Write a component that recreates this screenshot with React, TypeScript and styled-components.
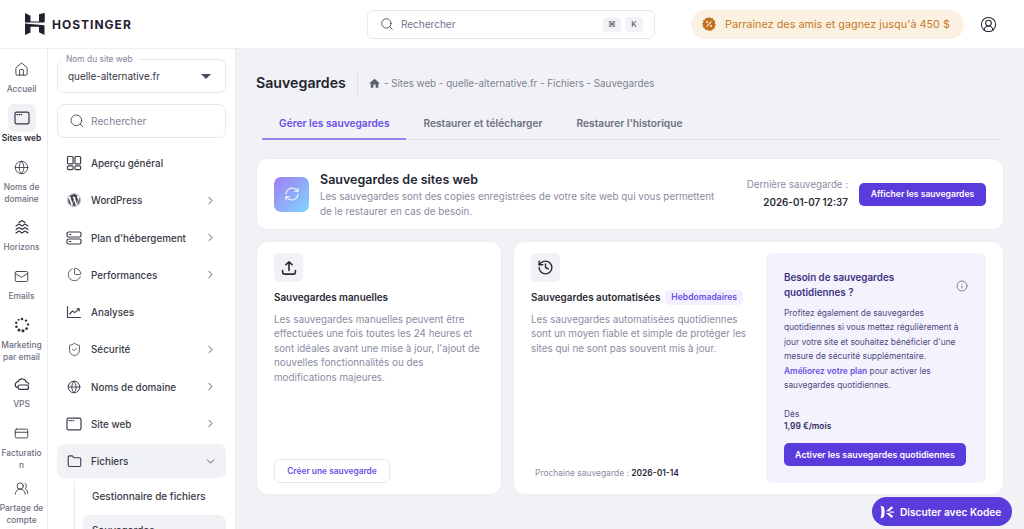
import React from "react";
import styled, { createGlobalStyle } from "styled-components";
import {
  ChartPie,
  ChevronDown,
  ChevronRight,
  CircleUserRound,
  CreditCard,
  Folder,
  Globe,
  History,
  House,
  Info,
  Mail,
  RefreshCw,
  Search,
  ShieldCheck,
  UsersRound,
} from "lucide-react";
import { FaWordpress } from "react-icons/fa";
import { MdHome } from "react-icons/md";

const GlobalStyle = createGlobalStyle`
  html, body {
    margin: 0;
    height: 100%;
    overflow: hidden;
    background: #fff;
    font-family: Inter, "Liberation Sans", sans-serif;
    color: #2a2b36;
  }
  * { box-sizing: border-box; }
`;

const Page = styled.div`
  display: flex;
  flex-direction: column;
  height: 529px;
  overflow: hidden;
  position: relative;
`;

const TopBar = styled.header`
  display: flex;
  align-items: center;
  height: 49px;
  flex-shrink: 0;
  border-bottom: 1px solid #eceef3;
  background: #fff;
  padding: 0 25px;
`;

const Logo = styled.div`
  display: flex;
  align-items: center;
  gap: 7px;
  width: 342px;
  font-size: 12px;
  font-weight: 700;
  letter-spacing: 1px;
  color: #1f2030;
`;

const TopSearch = styled.div`
  display: flex;
  align-items: center;
  width: 288px;
  height: 29px;
  border: 1px solid #e8e9ef;
  border-radius: 6px;
  padding: 0 11px 0 12px;
  gap: 7px;
  font-size: 10px;
  color: #73748a;
  svg { color: #45465a; }
`;

const Spacer = styled.span`
  flex: 1;
`;

const Key = styled.span`
  display: flex;
  align-items: center;
  justify-content: center;
  width: 18px;
  height: 15px;
  border-radius: 4px;
  background: #f1f2f6;
  font-size: 8px;
  color: #45465a;
  margin-left: -3px;
`;

const Promo = styled.div`
  display: flex;
  align-items: center;
  gap: 9px;
  height: 29px;
  width: 273px;
  margin-left: 36px;
  border-radius: 15px;
  background: #fbf1e2;
  padding: 0 11px;
  font-size: 10.85px;
  color: #c77a26;
  white-space: nowrap;
`;

const UserIcon = styled.div`
  display: flex;
  margin-left: 16px;
  color: #24252f;
`;

const Body = styled.div`
  display: flex;
  flex: 1;
  min-height: 0;
`;

const Rail = styled.nav`
  width: 48px;
  flex-shrink: 0;
  border-right: 1px solid #eceef3;
  padding-top: 6px;
  display: flex;
  flex-direction: column;
  align-items: flex-start;
  overflow: hidden;
`;

const RailItem = styled.div<{ $after: number }>`
  display: flex;
  flex-direction: column;
  align-items: center;
  width: 43px;
  flex-shrink: 0;
  margin-bottom: ${(p) => p.$after}px;
`;

const RailIcon = styled.div<{ $active?: boolean }>`
  width: 28px;
  height: 28px;
  border-radius: 6px;
  display: flex;
  align-items: center;
  justify-content: center;
  color: #32333f;
  background: ${(p) => (p.$active ? "#f0f1f4" : "transparent")};
`;

const RailLabel = styled.div<{ $active?: boolean }>`
  font-size: 8.4px;
  line-height: 12px;
  text-align: center;
  white-space: pre;
  font-weight: ${(p) => (p.$active ? 600 : 500)};
  color: ${(p) => (p.$active ? "#2a2b36" : "#6d6e80")};
`;

const Side = styled.aside`
  width: 187px;
  flex-shrink: 0;
  background: #fff;
  padding: 10px 9px 0 9px;
  overflow: hidden;
`;

const SiteSelect = styled.div`
  position: relative;
  display: flex;
  align-items: center;
  justify-content: space-between;
  height: 34px;
  border: 1px solid #e8e9ef;
  border-radius: 7px;
  padding: 0 14px 0 10px;
  font-size: 9.9px;
  color: #35363f;
`;

const Legend = styled.span`
  position: absolute;
  left: 3px;
  top: -7px;
  padding: 0 5px;
  background: #fff;
  font-size: 8.4px;
  line-height: 12px;
  color: #83849a;
`;

const Caret = styled.span`
  width: 0;
  height: 0;
  border-left: 5px solid transparent;
  border-right: 5px solid transparent;
  border-top: 5px solid #4a4b5c;
`;

const SideSearch = styled.div`
  display: flex;
  align-items: center;
  gap: 6px;
  height: 34px;
  margin: 11px 0 8px;
  border: 1px solid #e8e9ef;
  border-radius: 7px;
  padding: 0 11px;
  font-size: 10.2px;
  color: #83849a;
  svg { color: #4a4b5c; }
`;

const MenuRow = styled.div<{ $open?: boolean }>`
  display: flex;
  align-items: center;
  height: 34px;
  margin-bottom: 3.25px;
  border-radius: 7px;
  padding: 0 9px 0 9px;
  gap: 9px;
  font-size: 9.85px;
  font-weight: 500;
  color: #3a3b48;
  background: ${(p) => (p.$open ? "#f1f2f5" : "transparent")};
  svg { flex-shrink: 0; }
`;

const MenuIcon = styled.span`
  display: flex;
  width: 16px;
  justify-content: center;
  color: #3d3e4c;
`;

const MenuText = styled.span`
  flex: 1;
`;

const SubMenu = styled.div`
  margin-left: 17px;
  border-left: 1px solid #e8e9ef;
  padding-left: 8px;
`;

const SubRow = styled.div<{ $active?: boolean }>`
  display: flex;
  align-items: center;
  height: 30px;
  padding-left: 9px;
  margin-bottom: 4px;
  border-radius: 7px;
  font-size: 10px;
  font-weight: 500;
  color: #3a3b48;
  background: ${(p) => (p.$active ? "#f1f2f5" : "transparent")};
`;

const Main = styled.main`
  flex: 1;
  min-width: 0;
  background: #f1f2f6;
  border-left: 1px solid #e9eaef;
  padding: 22px 21px 0 21px;
  overflow: hidden;
`;

const TitleRow = styled.div`
  display: flex;
  align-items: center;
  height: 24px;
`;

const PageTitle = styled.h1`
  margin: 0 0 0 -1px;
  padding-right: 11px;
  height: 24px;
  line-height: 24px;
  border-right: 1px solid #dfe0e7;
  font-size: 14.2px;
  font-weight: 600;
  color: #23242e;
`;

const Crumbs = styled.div`
  display: flex;
  align-items: center;
  gap: 3px;
  margin-left: 10px;
  font-size: 9.8px;
  color: #80818f;
  svg { color: #5d5e6e; }
`;

const Tabs = styled.div`
  display: flex;
  margin: 11px 0 19px 5px;
  height: 34px;
  border-bottom: 1px solid #e4e5ec;
`;

const Tab = styled.div<{ $active?: boolean }>`
  display: flex;
  align-items: center;
  justify-content: center;
  height: 34px;
  padding: 1px 17px 0;
  font-size: 10.2px;
  font-weight: 600;
  white-space: nowrap;
  color: ${(p) => (p.$active ? "#6c4fe6" : "#6f7082")};
  border-bottom: 2px solid ${(p) => (p.$active ? "#9c84ec" : "transparent")};
`;

const Card = styled.section`
  background: #fff;
  border-radius: 10px;
  box-shadow: 0 0 2px rgba(40, 40, 80, 0.08);
`;

const HeroCard = styled(Card)`
  display: flex;
  align-items: center;
  height: 70px;
  padding: 0 17px;
  margin-bottom: 13px;
`;

const HeroIcon = styled.div`
  width: 35px;
  height: 35px;
  flex-shrink: 0;
  border-radius: 7px;
  margin-right: 11px;
  display: flex;
  align-items: center;
  justify-content: center;
  color: rgba(255, 255, 255, 0.9);
  background: linear-gradient(135deg, #a17cf3, #7fd6fd);
`;

const HeroText = styled.div`
  flex: 1;
  margin-top: 2px;
`;

const HeroTitle = styled.h2`
  margin: 0 0 1px;
  font-size: 12.5px;
  line-height: 16px;
  font-weight: 600;
  color: #262733;
`;

const Muted = styled.p`
  margin: 0;
  font-size: 9.85px;
  line-height: 14.4px;
  color: #8b8c9f;
`;

const LastSave = styled.div`
  text-align: right;
  margin: 1px 11px 0 0;
`;

const LastLabel = styled.div`
  font-size: 9.7px;
  line-height: 15px;
  color: #8b8c9f;
`;

const LastDate = styled.div`
  font-size: 9.85px;
  line-height: 20px;
  font-weight: 600;
  color: #2a2b36;
`;

const PrimaryButton = styled.button<{ $wide?: boolean }>`
  display: block;
  height: 23px;
  width: ${(p) => (p.$wide ? "182px" : "127px")};
  border: 0;
  border-radius: 5px;
  background: #5a3bdb;
  color: #fff;
  font-family: inherit;
  font-size: ${(p) => (p.$wide ? "8.8px" : "8.6px")};
  font-weight: 600;
  padding: 0;
  white-space: nowrap;
`;

const CardGrid = styled.div`
  display: grid;
  grid-template-columns: 244px 1fr;
  gap: 13px;
  height: 252px;
`;

const ManualCard = styled(Card)`
  display: flex;
  flex-direction: column;
  padding: 11px 17px;
`;

const AutoCard = styled(Card)`
  display: flex;
  padding: 11px 17px;
  gap: 12px;
`;

const AutoMain = styled.div`
  flex: 1;
  display: flex;
  flex-direction: column;
`;

const ToolIcon = styled.div`
  width: 29px;
  height: 29px;
  border-radius: 5px;
  background: #f1f2f6;
  display: flex;
  align-items: center;
  justify-content: center;
  color: #2a2b36;
`;

const CardHead = styled.div`
  display: flex;
  align-items: center;
  gap: 5px;
  height: 16px;
  margin: 7px 0 7px;
  font-size: 9.9px;
  font-weight: 600;
  color: #2a2b36;
`;

const Badge = styled.span`
  padding: 0 6px;
  height: 15px;
  line-height: 15px;
  border-radius: 5px;
  background: #f2f0fe;
  color: #6d4ee8;
  font-size: 8.6px;
  font-weight: 600;
`;

const Next = styled.div`
  margin-top: auto;
  margin-left: 4px;
  margin-bottom: 5px;
  font-size: 8.45px;
  color: #8b8c9f;
  b {
    font-weight: 600;
    color: #2a2b36;
  }
`;

const OutlineButton = styled.button`
  margin-top: auto;
  width: 116px;
  height: 24px;
  border: 1px solid #e8e9ef;
  border-radius: 5px;
  background: #fff;
  color: #6c4fe6;
  font-family: inherit;
  font-size: 8.4px;
  font-weight: 600;
  padding: 0;
`;

const UpsellPanel = styled.div`
  width: 220px;
  flex-shrink: 0;
  border-radius: 6px;
  background: #f4f3fd;
  padding: 18px 18px 17px;
  display: flex;
  flex-direction: column;
`;

const UpsellHead = styled.div`
  display: flex;
  align-items: center;
  justify-content: space-between;
  font-size: 9.8px;
  line-height: 14.5px;
  font-weight: 600;
  color: #3e3183;
  margin-bottom: 6px;
  svg { color: #5f6070; }
`;

const UpsellText = styled.p`
  margin: 0;
  font-size: 8.4px;
  line-height: 14.4px;
  color: #4e4a7f;
  a {
    color: #6c4fe6;
    font-weight: 600;
  }
`;

const Price = styled.div`
  margin-top: auto;
  margin-bottom: 11px;
  font-size: 8.4px;
  line-height: 12px;
  color: #4e4a7f;
  b {
    display: block;
    font-weight: 600;
    color: #2e2a5e;
  }
`;

const KodeeButton = styled.div`
  position: absolute;
  right: 12px;
  bottom: 3px;
  width: 140px;
  height: 29px;
  border-radius: 15px;
  background: #5a3bdb;
  color: #fff;
  font-size: 10.2px;
  font-weight: 600;
  display: flex;
  align-items: center;
  gap: 5px;
  padding-left: 7px;
  white-space: nowrap;
`;

const HostingerMark = () => (
  <svg width="20" height="22" viewBox="0 0 20 22" fill="#1f2030">
    <path d="M0 0l5.5 2.8v5.6L14 8.4V2.6L14 2.6 19.5 0v9.6L0 9.6z" />
    <path d="M14 1.2l5.5-1.2v8.4H14z" />
    <path d="M0 10.6l19.5 1.6V22L14 19.2v-5.4H5.5v5.6L0 22z" />
  </svg>
);

const BrowserIcon = ({ size = 16 }: { size?: number }) => (
  <svg width={size} height={size} viewBox="0 0 16 16" fill="none" stroke="currentColor" strokeWidth="1.2">
    <rect x="1" y="2.2" width="14" height="11.6" rx="1.6" />
    <path d="M3 4.6h.6M5 4.6h.6M7 4.6h.6" strokeLinecap="round" />
  </svg>
);

const OverviewIcon = () => (
  <svg width="16" height="16" viewBox="0 0 16 16" fill="none" stroke="currentColor" strokeWidth="1.2">
    <rect x="1.5" y="1.5" width="5.6" height="7.4" rx="1" />
    <rect x="9" y="1.5" width="5.6" height="7.4" rx="1" />
    <rect x="1.5" y="10.8" width="5.6" height="3.8" rx="1" />
    <rect x="9" y="10.8" width="5.6" height="3.8" rx="1" />
  </svg>
);

const HorizonsIcon = () => (
  <svg width="16" height="16" viewBox="0 0 16 16" fill="none" stroke="currentColor" strokeWidth="1.2" strokeLinecap="round" strokeLinejoin="round">
    <path d="M5 3.5L8 1.5l3 2" />
    <path d="M2 7l3-2 3 2 3-2 3 2" />
    <path d="M2 10.5l3-2 3 2 3-2 3 2" />
    <path d="M2 14l3-2 3 2 3-2 3 2" />
  </svg>
);

const MarketingIcon = () => (
  <svg width="16" height="16" viewBox="0 0 16 16" fill="currentColor">
    <circle cx="8" cy="2" r="1.3" />
    <circle cx="12" cy="3.6" r="1.2" />
    <circle cx="14" cy="7.4" r="1.2" />
    <circle cx="12.6" cy="11.6" r="1.4" />
    <circle cx="9" cy="13.8" r="1.6" />
    <circle cx="5" cy="13" r="1.6" />
    <circle cx="2.4" cy="9.8" r="1.3" />
    <circle cx="2.2" cy="5.8" r="1.2" />
    <circle cx="4.6" cy="2.8" r="1" />
  </svg>
);

const VpsIcon = () => (
  <svg width="16" height="16" viewBox="0 0 16 16" fill="none" stroke="currentColor" strokeWidth="1.2" strokeLinecap="round">
    <path d="M3 11.5C1.4 10.6 1 9.2 1.4 7.8 1.8 6.4 3 5.6 4.2 5.6 5 3.6 6.8 2.8 8.6 3c1.8.2 3.2 1.4 3.6 3 1.4.2 2.4 1 2.6 2.2" />
    <rect x="4" y="9" width="10.5" height="4.4" rx="2" />
  </svg>
);

const AnalyticsIcon = () => (
  <svg width="16" height="16" viewBox="0 0 16 16" fill="none" stroke="currentColor" strokeWidth="1.1" strokeLinecap="round" strokeLinejoin="round">
    <path d="M1.5 2.5v11h13" />
    <path d="M3.5 10l3-3 2.2 1.6L13 5" />
    <path d="M11 4.8h2.2V7" />
  </svg>
);

const PlanIcon = () => (
  <svg width="16" height="16" viewBox="0 0 16 16" fill="none" stroke="currentColor" strokeWidth="1.2" strokeLinecap="round">
    <rect x="1" y="2" width="14" height="5" rx="1.5" />
    <rect x="1" y="9" width="14" height="5" rx="1.5" />
    <path d="M3.4 4.5h1.4M3.4 11.5h1.4" />
  </svg>
);

const UploadIcon = () => (
  <svg width="16" height="16" viewBox="0 0 16 16" fill="none" stroke="currentColor" strokeWidth="1.6" strokeLinecap="round" strokeLinejoin="round">
    <path d="M8 10.5V2M5 4.6L8 1.8l3 2.8" />
    <path d="M1.6 10.5v1.4a2.2 2.2 0 0 0 2.2 2.2h8.4a2.2 2.2 0 0 0 2.2-2.2v-1.4" />
  </svg>
);

const KodeeMark = () => (
  <svg width="16" height="16" viewBox="0 0 16 16" fill="#fff">
    <path d="M1.5 1.5L4.8 3Q6.4 8 4.8 13L1.5 14.5Q3.6 8 1.5 1.5z" />
    <path d="M7 7.3L12.6 2.2l1.6 1.9L10 7.3z" />
    <path d="M10.4 7.5H15.2v1.2H10.4z" />
    <path d="M7 8.9L10 8.9l4.2 3.2-1.6 1.9z" />
  </svg>
);

const PromoBadge = () => (
  <svg width="14" height="14" viewBox="0 0 14 14">
    <path
      fill="#c2701e"
      d="M7 0l1.7 1.3 2.1-.2.7 2 1.9 1L12.7 6 14 7.6l-1.3 1.6.2 2.1-2 .7-1 1.7-2.1-.4L7 14l-1.7-1.3-2.1.3-.7-2-1.9-1 .7-2L0 7l1.3-1.6-.2-2.1 2-.7 1-1.9 2.1.4z"
    />
    <path stroke="#fbf1e2" strokeWidth="1.1" d="M9.4 4.4L4.6 9.6" />
    <circle cx="5" cy="5" r="1" fill="#fbf1e2" />
    <circle cx="9" cy="9" r="1" fill="#fbf1e2" />
  </svg>
);

const railItems = [
  { icon: <House size={15} strokeWidth={1.4} />, label: "Accueil", after: 9 },
  { icon: <BrowserIcon />, label: "Sites web", after: 9, active: true },
  { icon: <Globe size={15} strokeWidth={1.3} />, label: "Noms de\ndomaine", after: 8 },
  { icon: <HorizonsIcon />, label: "Horizons", after: 9 },
  { icon: <Mail size={15} strokeWidth={1.4} />, label: "Emails", after: 9 },
  { icon: <MarketingIcon />, label: "Marketing\npar email", after: 7 },
  { icon: <VpsIcon />, label: "VPS", after: 9 },
  { icon: <CreditCard size={15} strokeWidth={1.4} />, label: "Facturatio\nn", after: 3 },
  { icon: <UsersRound size={15} strokeWidth={1.4} />, label: "Partage de\ncompte", after: 0 },
];

const menuItems = [
  { icon: <OverviewIcon />, label: "Aperçu général" },
  { icon: <FaWordpress size={14} />, label: "WordPress", arrow: true },
  { icon: <PlanIcon />, label: "Plan d'hébergement", arrow: true },
  { icon: <ChartPie size={15} strokeWidth={1.3} />, label: "Performances", arrow: true },
  { icon: <AnalyticsIcon />, label: "Analyses" },
  { icon: <ShieldCheck size={15} strokeWidth={1.3} />, label: "Sécurité", arrow: true },
  { icon: <Globe size={14} strokeWidth={1.6} />, label: "Noms de domaine", arrow: true },
  { icon: <BrowserIcon />, label: "Site web", arrow: true },
];

const App = () => (
  <Page>
    <GlobalStyle />
    <TopBar>
      <Logo>
        <HostingerMark />
        HOSTINGER
      </Logo>
      <TopSearch>
        <Search size={14} strokeWidth={1.5} />
        Rechercher
        <Spacer />
        <Key>⌘</Key>
        <Key>K</Key>
      </TopSearch>
      <Promo>
        <PromoBadge />
        Parrainez des amis et gagnez jusqu'à 450 $
      </Promo>
      <UserIcon>
        <CircleUserRound size={17} strokeWidth={1.5} />
      </UserIcon>
    </TopBar>
    <Body>
      <Rail>
        {railItems.map((item) => (
          <RailItem key={item.label} $after={item.after}>
            <RailIcon $active={item.active}>{item.icon}</RailIcon>
            <RailLabel $active={item.active}>{item.label}</RailLabel>
          </RailItem>
        ))}
      </Rail>
      <Side>
        <SiteSelect>
          <Legend>Nom du site web</Legend>
          quelle-alternative.fr
          <Caret />
        </SiteSelect>
        <SideSearch>
          <Search size={16} strokeWidth={1.4} />
          Rechercher
        </SideSearch>
        {menuItems.map((item) => (
          <MenuRow key={item.label}>
            <MenuIcon>{item.icon}</MenuIcon>
            <MenuText>{item.label}</MenuText>
            {item.arrow && <ChevronRight size={13} strokeWidth={1.5} />}
          </MenuRow>
        ))}
        <MenuRow $open>
          <MenuIcon>
            <Folder size={15} strokeWidth={1.8} />
          </MenuIcon>
          <MenuText>Fichiers</MenuText>
          <ChevronDown size={13} strokeWidth={1.5} />
        </MenuRow>
        <SubMenu>
          <SubRow>Gestionnaire de fichiers</SubRow>
          <SubRow $active>Sauvegardes</SubRow>
        </SubMenu>
      </Side>
      <Main>
        <TitleRow>
          <PageTitle>Sauvegardes</PageTitle>
          <Crumbs>
            <MdHome size={13} />
            - Sites web - quelle-alternative.fr - Fichiers - Sauvegardes
          </Crumbs>
        </TitleRow>
        <Tabs>
          <Tab $active>Gérer les sauvegardes</Tab>
          <Tab>Restaurer et télécharger</Tab>
          <Tab>Restaurer l'historique</Tab>
        </Tabs>
        <HeroCard>
          <HeroIcon>
            <RefreshCw size={16} strokeWidth={1.6} />
          </HeroIcon>
          <HeroText>
            <HeroTitle>Sauvegardes de sites web</HeroTitle>
            <Muted>
              Les sauvegardes sont des copies enregistrées de votre site web qui vous permettent
              <br />
              de le restaurer en cas de besoin.
            </Muted>
          </HeroText>
          <LastSave>
            <LastLabel>Dernière sauvegarde :</LastLabel>
            <LastDate>2026-01-07 12:37</LastDate>
          </LastSave>
          <PrimaryButton>Afficher les sauvegardes</PrimaryButton>
        </HeroCard>
        <CardGrid>
          <ManualCard>
            <ToolIcon>
              <UploadIcon />
            </ToolIcon>
            <CardHead>Sauvegardes manuelles</CardHead>
            <Muted>
              Les sauvegardes manuelles peuvent être effectuées une fois toutes les 24 heures et
              sont idéales avant une mise à jour, l'ajout de nouvelles fonctionnalités ou des
              modifications majeures.
            </Muted>
            <OutlineButton>Créer une sauvegarde</OutlineButton>
          </ManualCard>
          <AutoCard>
            <AutoMain>
              <ToolIcon>
                <History size={17} strokeWidth={2} />
              </ToolIcon>
              <CardHead>
                Sauvegardes automatisées
                <Badge>Hebdomadaires</Badge>
              </CardHead>
              <Muted>
                Les sauvegardes automatisées quotidiennes sont un moyen fiable et simple de
                protéger les sites qui ne sont pas souvent mis à jour.
              </Muted>
              <Next>
                Prochaine sauvegarde : <b>2026-01-14</b>
              </Next>
            </AutoMain>
            <UpsellPanel>
              <UpsellHead>
                <span>
                  Besoin de sauvegardes
                  <br />
                  quotidiennes ?
                </span>
                <Info size={12} strokeWidth={1.5} />
              </UpsellHead>
              <UpsellText>
                Profitez également de sauvegardes quotidiennes si vous mettez régulièrement à jour
                votre site et souhaitez bénéficier d'une mesure de sécurité supplémentaire.{" "}
                <a>Améliorez votre plan</a> pour activer les sauvegardes quotidiennes.
              </UpsellText>
              <Price>
                Dès
                <b>1,99 €/mois</b>
              </Price>
              <PrimaryButton $wide>Activer les sauvegardes quotidiennes</PrimaryButton>
            </UpsellPanel>
          </AutoCard>
        </CardGrid>
      </Main>
    </Body>
    <KodeeButton>
      <KodeeMark />
      Discuter avec Kodee
    </KodeeButton>
  </Page>
);

export default App;
